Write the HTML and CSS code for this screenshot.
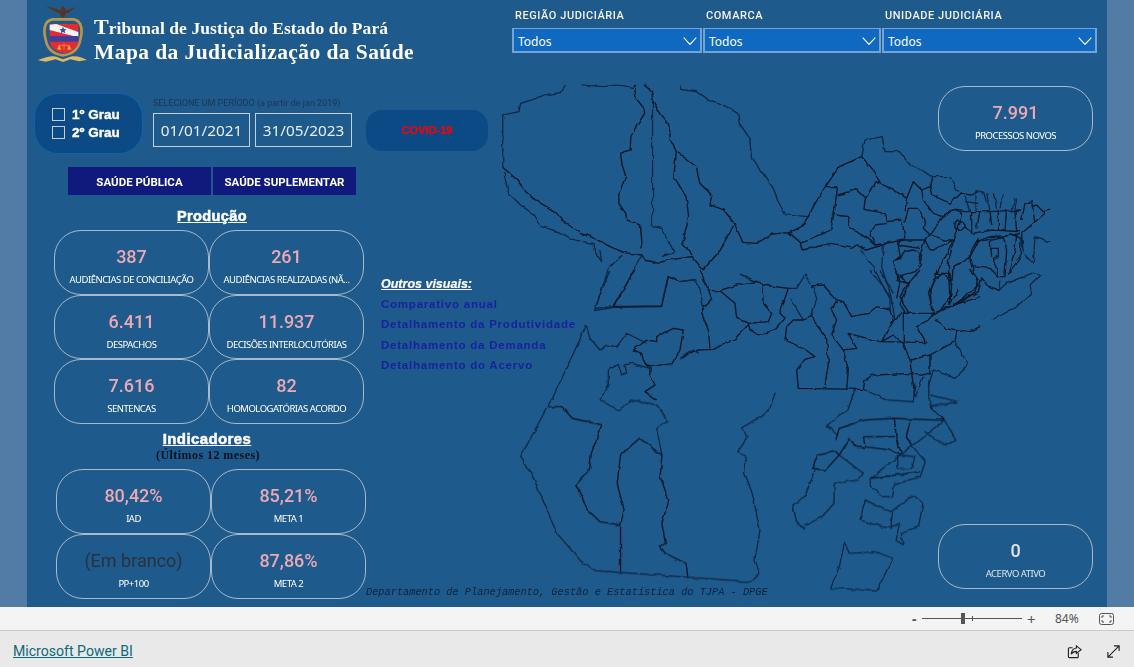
FILE: index.html
```html
<!DOCTYPE html>
<html lang="pt-BR">
<head>
    <meta charset="UTF-8">
    <meta name="viewport" content="width=device-width, initial-scale=1.0">
    <title>Mapa da Judicialização da Saúde</title>
    <link rel="stylesheet" href="styles.css">
</head>
<body>
    <div class="report">
        <div class="canvas">
            <!-- mapa do Pará, tracado por trechos -->
            <svg class="map" viewBox="27 0 1080 607" aria-hidden="true">
                <defs>
                    <filter id="rough" filterUnits="userSpaceOnUse" x="27" y="0" width="1080" height="607" color-interpolation-filters="sRGB">
                        <feTurbulence type="fractalNoise" baseFrequency="0.14" numOctaves="1" seed="4"/>
                        <feDisplacementMap in="SourceGraphic" scale="4" xChannelSelector="R" yChannelSelector="G"/>
                        <feGaussianBlur stdDeviation=".35"/>
                    </filter>
                </defs>
                <g filter="url(#rough)">
                    <g transform="translate(500 80) scale(.3444 .3333)">
                        <path class="faint" d="M8 105L55 95L60 70L105 55L125 45L175 38L190 15M240 15L300 20L340 15L385 22L395 15"/>
                        <path class="faint" d="M8 105L8 262M10 275L25 340L60 375L100 405L120 440L170 455L215 480L270 490L275 515L295 545L290 510"/>
                        <path class="faint" d="M525 15L525 28L570 35L605 60L640 70L690 100L695 130L725 175L730 230L790 320L810 370L830 405L895 410"/>
                        <path class="strong" d="M390 15L395 55L418 85L420 100L405 125L380 165L378 210L350 220L355 260L365 290L345 340L345 370L365 400L368 420L408 435L412 490L408 505"/>
                        <path class="strong" d="M8 262L50 300L75 335L110 365L160 395L190 430L235 460L275 475L320 500L360 517L412 525L420 540L460 550L490 540L558 530L590 570"/>
                        <path class="strong" d="M420 15L440 35L445 65L465 100L490 130L495 180L512 215L545 240L570 260L580 310L615 345L610 375L650 390L680 430L705 487L745 490L790 462L840 458L875 440L895 410L915 370L945 320L985 260L1050 230L1084 270"/>
                        <path class="faint" d="M1050 230L1060 180L1110 170L1118 215L1160 215L1190 255L1222 270"/>
                        <path class="strong" d="M512 215L505 290L540 350L548 410L530 490L558 525M590 570L640 510L680 430"/>
                        <path class="faint" d="M443 60L443 440L470 445L505 515L470 530M355 525L315 565L275 692L330 682"/>
                        <path class="strong" d="M875 490L960 450L970 400L980 320L945 320M980 345L1016 335M975 405L1010 410L1016 444M875 490L880 510L960 490L1016 500M840 458L875 490"/>
                        <path class="faint" d="M412 525L330 682L468 680L488 590L520 605L570 600"/>
                    </g>
                    <g transform="translate(850 170) scale(.3333)">
                        <path class="strong" d="M70 0L90 40L75 35L45 90L42 118L105 130L112 155L155 150L165 205L148 215M75 35L125 55L170 85L165 125M0 60L20 60L45 85M170 85L190 35L215 60L240 50L245 20"/>
                        <path class="faint" d="M215 0L245 20L300 20L320 60L345 75"/>
                        <path class="strong" d="M240 50L245 75L300 100L330 70L365 75M165 155L175 115L205 115L225 150L220 175L240 195M215 60L220 90L250 130L280 140L310 120L345 125M280 140L245 190L225 210L165 210L75 225L30 190L0 175M75 165L110 160M75 165L60 195L75 225M0 235L25 225L45 240L100 225"/>
                        <path class="faint" d="M35 240L70 290L95 340L130 400M100 225L95 290L120 370L130 420L135 450"/>
                        <path class="strong" d="M145 225L150 260L130 275L150 335L140 385M148 215L145 225L210 235M225 210L205 270L215 285L195 305L150 320L175 340L150 380L175 430M150 265L165 245L190 240L215 255L205 285M245 195L280 210L310 210L265 300L240 360L245 420M225 210L240 240L250 240L310 210"/>
                        <path class="strong" d="M255 310L300 310L305 355L290 400L260 430M310 210L335 130L310 120M310 210L295 280L300 400M360 260L310 290L305 340M360 260L385 215L510 190"/>
                        <path class="strong" d="M345 125L420 125L510 120M345 170L365 190L430 180L510 185M380 215L420 200L500 195L515 210M365 125L365 190M390 125L380 175M420 125L425 165M445 120L445 180M470 115L465 180M495 125L500 185M385 205L365 240L360 265M420 205L425 260M460 200L470 240L465 320M500 195L495 240L475 310M515 190L510 265L475 310M420 235L445 235L445 260L430 265L440 300L445 320L465 320M365 290L420 295L445 320M360 265L365 290L385 345L340 385L310 405"/>
                        <path class="strong" d="M245 440L260 430L310 405L385 365L395 320L410 345L445 362"/>
                        <path class="faint" d="M445 362L470 340L545 310L570 315L540 345L545 370L500 410L455 435L425 450M445 362L450 335"/>
                        <path class="faint" d="M375 125L375 65L400 62L410 100M410 70L420 125M430 70L440 115M460 70L450 115M495 85L485 125M500 85L495 120M365 75L385 65M345 80L360 125M345 95L385 100"/>
                        <path class="strong" d="M515 190L585 130M515 150L525 100L545 95L555 160M545 110L560 105L580 125L600 120"/>
                        <path class="faint" d="M515 190L520 250L550 280L555 200L600 215"/>
                        <path class="strong" d="M315 175L335 180L345 170L335 155L322 150L315 160L315 175"/>
                    </g>
                    <g transform="translate(680 270) scale(.3333)">
                        <path class="strong" d="M60 0L85 60L95 90L70 115L65 130L85 180L90 235M85 62L120 62L170 45L230 35L250 45L325 55M180 12L230 35M120 62L165 100L170 145L205 160L265 155L275 130L250 100L245 45"/>
                        <path class="faint" d="M0 35L45 28L60 60L70 110M325 55L350 55L375 15L400 55L410 85L395 140"/>
                        <path class="strong" d="M325 55L300 130L315 145L285 180L235 195L210 180L205 160M205 165L160 210L100 238L55 240L30 250L5 265"/>
                        <path class="strong" d="M390 48L430 45L470 90L490 95L515 140L565 130L590 110L630 120L640 155L620 185L605 215L640 195L665 215M470 95L455 120L470 150L455 195L490 240L530 235L505 190L600 215L740 218L710 170L745 150L765 125L840 100L900 80"/>
                        <path class="faint" d="M330 85L370 150M600 0L640 70M570 0L610 50L630 90L630 120M730 320L705 380"/>
                        <path class="strong" d="M370 150L395 140L420 175L440 210L445 280L435 350M370 150L340 150L320 170L315 210L370 235L405 260L375 268L350 300L355 355L550 358M490 240L505 300L500 355M550 358L555 330L580 315L695 310L750 315L750 255L690 270M670 130L670 220L690 270L695 310L705 380M670 130L765 130M665 130L630 160"/>
                        <path class="strong" d="M765 150L800 175L830 185L880 180L900 170M830 185L825 215L750 255M655 35L690 35L720 0M655 35L650 0M690 35L680 60L660 100L675 130M745 70L760 30L790 10L815 40L810 105M745 70L760 125M770 0L770 15M870 0L895 30L885 65L840 100M835 60L810 105"/>
                        <path class="faint" d="M825 215L865 285L825 325L760 300L745 350M550 358L620 390M520 360L515 390"/>
                    </g>
                    <g transform="translate(500 270) scale(.3333)">
                        <path class="faint" d="M330 0L285 115L340 110M260 165L155 390M540 265L580 240L600 250"/>
                        <path class="strong" d="M405 0L340 110L485 108L505 20L535 35"/>
                        <path class="faint" d="M260 165L270 205L300 240L320 225L350 230L380 190L420 210L440 220"/>
                        <path class="strong" d="M440 210L400 240L425 250L430 270L450 290L520 280L540 240L550 180L520 175L470 200L470 215L440 210M430 270L450 295L450 315L465 345L435 365L470 390"/>
                        <path class="faint" d="M300 390L325 340L325 300L355 280L365 315L380 310L375 285L395 280L450 295"/>
                    </g>
                    <g transform="translate(500 340) scale(.3444 .3333)">
                        <path class="faint" d="M148 180L60 350L100 420L165 580L240 670L280 692L730 725L755 700L740 660L755 570L730 450L710 400L715 350L690 335L720 290L700 265L780 215L800 155"/>
                        <path class="strong" d="M140 200L180 200L210 235L295 255L265 340L260 390L220 435L255 510L290 545L350 555L350 695M350 555L360 510L340 430L350 345L405 295L470 345L465 410L490 480L470 550L480 610L465 620L480 640L540 670L545 710"/>
                        <path class="faint" d="M290 180L345 210L380 180L455 195L490 245L455 265L470 345"/>
                        <path class="faint" d="M1030 150L1010 210L985 225L950 260L980 285M1124 180L1200 185L1205 130"/>
                        <path class="strong" d="M975 300L985 265L1060 240L1145 235L1150 290L1165 340M1055 290L1145 290M1055 290L1060 320L1130 330L1160 345M985 345L1015 295L1030 320L1060 325M985 345L975 335L925 345L905 385L945 390L985 345"/>
                        <path class="faint" d="M985 345L1055 400L1040 420L970 430L970 490L930 535L885 555L880 570L860 540L850 495L885 470L915 390"/>
                        <path class="strong" d="M1145 235L1260 240L1290 240M1250 200L1290 240M1075 415L1220 395M1190 245L1180 290L1195 315"/>
                        <path class="faint" d="M1245 120L1245 170L1250 200L1330 185L1250 165M1290 240L1075 415L1075 440L1115 470L1140 470L1145 435L1220 410L1235 365L1195 315M1155 345L1155 385L1195 385L1205 350L1155 345M1290 240L1325 300L1295 315L1230 275"/>
                        <path class="faint" d="M1045 540L1060 480L1090 495L1135 515L1200 465L1228 490L1215 560L1165 580L1170 615L1150 600L1160 550L1135 560L1140 515M1045 540L1110 560L1140 565M960 745L985 680L1000 610L1015 640L1090 635L1140 655L1095 750L960 745"/>
                    </g>
                </g>
            </svg>

            <header class="top">
                <div class="brand">
                    <svg class="crest" viewBox="22 15 156 180" aria-hidden="true">
                        <path d="M48 18L80 26L92 32L100 16L110 32L137 20L118 38L108 40L104 52L95 52L90 40L72 32Z" fill="#5a3420"/>
                        <path d="M68 58C44 62 40 90 48 118C52 146 72 162 100 166C128 162 148 146 152 118C160 90 156 62 132 58Z" fill="none" stroke="#b8954e" stroke-width="8"/>
                        <path d="M60 72H146V122C146 144 124 156 103 160C82 156 60 144 60 122Z" fill="#e32b34"/>
                        <path d="M60 74L80 72L146 96V112L60 90Z" fill="#f4f4f4"/>
                        <path d="M100 80L103 87L110 88L105 93L107 100L100 96L93 100L95 93L90 88L97 87Z" fill="#2f4fa8"/>
                        <rect x="60" y="108" width="86" height="17" fill="#3c3f9c"/>
                        <path d="M103 130V150M88 136H118M88 136L84 148H94ZM118 136L114 148H124Z" fill="#e0a83c" stroke="#e0a83c" stroke-width="2"/>
                        <path d="M24 180C50 170 70 166 80 170L100 178L122 170C140 166 155 172 172 180L148 184L122 178L100 186L78 178L48 185Z" fill="#d8bb6a"/>
                    </svg>
                    <div class="brand-text">
                        <div class="court"><span class="court-initial">T</span>ribunal de Justiça do Estado do Pará</div>
                        <div class="title">Mapa da Judicialização da Saúde</div>
                    </div>
                </div>
                <div class="filters">
                    <div class="filter filter-region">
                        <label class="filter-label">REGIÃO JUDICIÁRIA</label>
                        <div class="select">Todos
                            <svg class="chevron" viewBox="0 0 12 7"><path d="M.5 .5L6 6.5L11.5 .5"/></svg>
                        </div>
                    </div>
                    <div class="filter filter-comarca">
                        <label class="filter-label">COMARCA</label>
                        <div class="select">Todos
                            <svg class="chevron" viewBox="0 0 12 7"><path d="M.5 .5L6 6.5L11.5 .5"/></svg>
                        </div>
                    </div>
                    <div class="filter filter-unit">
                        <label class="filter-label">UNIDADE JUDICIÁRIA</label>
                        <div class="select">Todos
                            <svg class="chevron" viewBox="0 0 12 7"><path d="M.5 .5L6 6.5L11.5 .5"/></svg>
                        </div>
                    </div>
                </div>
            </header>

            <main class="body">
                <section class="left">
                    <div class="controls">
                        <div class="grau">
                            <div class="grau-item"><span class="check"></span>1º Grau</div>
                            <div class="grau-item"><span class="check"></span>2º Grau</div>
                        </div>
                        <div class="period">
                            <div class="period-label">SELECIONE UM PERÍODO (a partir de jan 2019)</div>
                            <div class="dates">
                                <div class="date">01/01/2021</div>
                                <div class="date">31/05/2023</div>
                            </div>
                        </div>
                        <div class="covid">COVID-19</div>
                    </div>

                    <div class="tabs">
                        <div class="tab">SAÚDE PÚBLICA</div>
                        <div class="tab">SAÚDE SUPLEMENTAR</div>
                    </div>

                    <div class="stats">
                        <div class="stats-main">
                            <h2 class="section-title">Produção</h2>
                            <div class="cards">
                                <div class="card"><div class="card-value">387</div><div class="card-label">AUDIÊNCIAS DE CONCILIAÇÃO</div></div>
                                <div class="card"><div class="card-value">261</div><div class="card-label">AUDIÊNCIAS REALIZADAS (NÃ...</div></div>
                                <div class="card"><div class="card-value">6.411</div><div class="card-label">DESPACHOS</div></div>
                                <div class="card"><div class="card-value">11.937</div><div class="card-label">DECISÕES INTERLOCUTÓRIAS</div></div>
                                <div class="card"><div class="card-value">7.616</div><div class="card-label">SENTENCAS</div></div>
                                <div class="card"><div class="card-value">82</div><div class="card-label">HOMOLOGATÓRIAS ACORDO</div></div>
                            </div>
                            <h2 class="section-title section-title-ind">Indicadores</h2>
                            <div class="section-sub">(Últimos 12 meses)</div>
                            <div class="cards cards-ind">
                                <div class="card"><div class="card-value">80,42%</div><div class="card-label">IAD</div></div>
                                <div class="card"><div class="card-value">85,21%</div><div class="card-label">META 1</div></div>
                                <div class="card"><div class="card-value card-blank">(Em branco)</div><div class="card-label">PP+100</div></div>
                                <div class="card"><div class="card-value">87,86%</div><div class="card-label">META 2</div></div>
                            </div>
                        </div>
                        <aside class="others">
                            <div class="others-title">Outros visuais:</div>
                            <a class="others-link">Comparativo anual</a>
                            <a class="others-link">Detalhamento da Produtividade</a>
                            <a class="others-link">Detalhamento da Demanda</a>
                            <a class="others-link">Detalhamento do Acervo</a>
                            <div class="credit">Departamento de Planejamento, Gestão e Estatística do TJPA - DPGE</div>
                        </aside>
                    </div>
                </section>

                <section class="totals">
                    <div class="card"><div class="card-value">7.991</div><div class="card-label">PROCESSOS NOVOS</div></div>
                    <div class="card"><div class="card-value card-zero">0</div><div class="card-label card-label-dim">ACERVO ATIVO</div></div>
                </section>
            </main>
        </div>
    </div>

    <div class="zoombar">
        <span class="zoom-minus">-</span>
        <div class="slider"><span class="slider-tick"></span><span class="slider-thumb"></span></div>
        <span class="zoom-plus">+</span>
        <span class="zoom-value">84%</span>
        <svg class="fit" viewBox="0 0 15 12"><rect x=".5" y=".5" width="14" height="11" rx="2"/><path d="M3 5V3H5M10 3H12V5M12 7V9H10M5 9H3V7"/></svg>
    </div>

    <footer class="pbi">
        <a class="pbi-link">Microsoft Power BI</a>
        <div class="pbi-actions">
            <svg class="pbi-icon" viewBox="0 0 16 16"><path d="M12 9.500V13.500C12 14 11.600 14.500 11 14.500H2.500C2 14.500 1.500 14 1.500 13.500V5C1.500 4.500 2 4 2.500 4H6"/><path d="M10 2L15 6L10 10V7.800C7.500 7.800 5.800 8.800 4.500 11C4.800 7.500 6.800 4.800 10 4.300Z"/></svg>
            <svg class="pbi-icon" viewBox="0 0 16 16"><path d="M2 14L14 2M8.500 2H14V7.500M2 8.500V14H7.500"/></svg>
        </div>
    </footer>
</body>
</html>
```

FILE: styles.css
```css
* {
    box-sizing: border-box;
}

body {
    margin: 0;
    width: 1134px;
    height: 667px;
    overflow: hidden;
    font-family: "Noto Sans", Arial, sans-serif;
    background-color: #e9e9e9;
}

.report {
    height: 607px;
    padding: 0 27px;
    background-color: #527ba5;
}

.canvas {
    position: relative;
    width: 1080px;
    height: 607px;
    background-color: #1f5a8c;
}

/* mapa */
.map {
    position: absolute;
    left: 0;
    top: 0;
    width: 1080px;
    height: 607px;
}

.map path {
    fill: none;
    stroke-linejoin: round;
}

.map .strong {
    stroke: #081828;
    stroke-width: 4;
}

.map .faint {
    stroke: #0c2540;
    stroke-width: 3.6;
}

/* cabeçalho */
.top {
    position: relative;
    display: flex;
    height: 86px;
    padding-left: 10px;
}

.brand {
    display: flex;
    padding-top: 5px;
}

.crest {
    width: 52px;
    height: 60px;
}

.brand-text {
    margin-left: 5px;
    padding-top: 11px;
    color: #fff;
    font-family: "Liberation Serif", serif;
    font-weight: bold;
}

.court {
    font-size: 17.5px;
    line-height: 22px;
    letter-spacing: .09px;
}

.court-initial {
    font-size: 22px;
}

.title {
    margin-top: 1px;
    font-size: 21.5px;
    line-height: 25px;
    letter-spacing: .42px;
}

.filters {
    display: flex;
    margin-left: auto;
    margin-right: 10px;
    padding-top: 8px;
    gap: 1px;
}

.filter-region {
    width: 190px;
}

.filter-comarca {
    width: 178px;
}

.filter-unit {
    width: 215px;
}

.filter-label {
    display: block;
    height: 20px;
    padding-left: 3px;
    color: #f2f2f2;
    font-family: Roboto, sans-serif;
    font-size: 11px;
    font-weight: 500;
    line-height: 15px;
    letter-spacing: .55px;
}

.select {
    position: relative;
    height: 25px;
    padding-left: 4px;
    border: 2px solid #77a3d3;
    border-top-width: 1px;
    background-color: #0f69c0;
    color: #fff;
    font-size: 12px;
    line-height: 26px;
}

.chevron {
    position: absolute;
    right: 3px;
    top: 8px;
    width: 14px;
    height: 8px;
}

.chevron path {
    fill: none;
    stroke: #fff;
}

/* corpo */
.body {
    position: relative;
    display: flex;
    justify-content: space-between;
    padding: 0 14px 0 7px;
}

.controls {
    display: flex;
    margin-top: 7px;
}

.grau {
    display: flex;
    flex-direction: column;
    justify-content: center;
    width: 109px;
    height: 61px;
    padding-left: 17px;
    gap: 4px;
    border: 1px solid #1062ae;
    border-radius: 24px;
    background-color: #0b4a85;
}

.grau-item {
    display: flex;
    align-items: center;
    height: 14px;
    color: #fff;
    font-family: "Liberation Sans", sans-serif;
    font-size: 13.5px;
    font-weight: bold;
    -webkit-text-stroke: .4px #fff;
}

.check {
    width: 13px;
    height: 13px;
    margin-right: 7px;
    border: 1px solid #c6ccd4;
}

.period {
    margin-left: 10px;
}

.period-label {
    height: 20px;
    padding-top: 5px;
    color: #1d3550;
    font-family: Roboto, sans-serif;
    font-size: 9px;
    line-height: 10px;
    white-space: nowrap;
}

.dates {
    display: flex;
    gap: 5px;
}

.date {
    width: 97px;
    height: 34px;
    border: 1px solid #c3d0dd;
    color: #e8edf3;
    font-size: 15.3px;
    line-height: 33px;
    text-align: center;
}

.covid {
    width: 122px;
    height: 41px;
    margin: 17px 0 0 14px;
    border-radius: 16px;
    background-color: #0b4a85;
    color: #f00;
    font-family: "Liberation Sans", sans-serif;
    font-size: 11px;
    font-weight: bold;
    line-height: 41px;
    text-align: center;
    -webkit-text-stroke: .2px #f00;
}

.tabs {
    display: flex;
    gap: 2px;
    margin: 13px 0 0 34px;
}

.tab {
    width: 143px;
    height: 28px;
    background-color: #0f1a7c;
    color: #fff;
    font-family: Roboto, sans-serif;
    font-size: 11.5px;
    font-weight: 700;
    line-height: 30px;
    text-align: center;
}

.stats {
    display: flex;
    height: 403px;
}

.stats-main {
    width: 332px;
    padding-left: 20px;
}

.section-title {
    margin: 13px 0 6px;
    padding-left: 4px;
    color: #fff;
    font-family: "Liberation Sans", sans-serif;
    font-size: 14.5px;
    font-weight: bold;
    line-height: 16px;
    letter-spacing: .4px;
    text-align: center;
    text-decoration: underline;
    -webkit-text-stroke: .5px #fff;
}

.section-title-ind {
    margin: 7px 0 1px;
    padding: 0 6px 0 0;
    font-size: 15px;
}

.section-sub {
    margin-bottom: 7px;
    padding-right: 4px;
    color: #08131f;
    font-family: "Liberation Serif", serif;
    font-size: 12px;
    font-weight: bold;
    line-height: 14px;
    letter-spacing: .45px;
    text-align: center;
}

.cards {
    display: grid;
    grid-template-columns: 155px 155px;
    grid-auto-rows: 64.500px;
}

.cards-ind {
    margin-left: 2px;
    grid-auto-rows: 65px;
}

.card {
    display: flex;
    flex-direction: column;
    align-items: center;
    height: 100%;
    padding-top: 14px;
    border: 1px solid #a9b9c9;
    border-radius: 27px;
}

.card-value {
    color: #eba9b3;
    font-family: Roboto, sans-serif;
    font-size: 18px;
    font-weight: 500;
    line-height: 24px;
}

.card-blank {
    color: #28323e;
    font-weight: 400;
}

.card-zero {
    color: #dfe3e8;
}

.card-label {
    margin-top: 4px;
    color: #fff;
    font-size: 9.5px;
    line-height: 14px;
    letter-spacing: -.5px;
    white-space: nowrap;
}

.card-label-dim {
    color: #dfe3e8;
}

.others {
    display: flex;
    flex-direction: column;
    width: 130px;
    padding: 82px 0 0 15px;
    white-space: nowrap;
}

.others-title {
    height: 17px;
    color: #fff;
    font-family: "Liberation Sans", sans-serif;
    font-size: 12.5px;
    font-weight: bold;
    font-style: italic;
    line-height: 15px;
    text-decoration: underline;
    -webkit-text-stroke: .2px #fff;
}

.others-link {
    height: 20.300px;
    color: #1622a0;
    font-family: "Liberation Sans", sans-serif;
    font-size: 11.5px;
    font-weight: bold;
    line-height: 20px;
    letter-spacing: .77px;
}

.credit {
    margin: auto 0 0 -15px;
    color: #0d2339;
    font-family: "Liberation Mono", monospace;
    font-size: 10.300px;
    font-style: italic;
    line-height: 12px;
}

.totals {
    display: flex;
    flex-direction: column;
    justify-content: space-between;
    width: 155px;
    height: 503px;
}

.totals .card {
    height: 65px;
}

/* barra de zoom */
.zoombar {
    display: flex;
    align-items: center;
    height: 24px;
    padding-left: 912px;
    border-bottom: 1px solid #c9c9c9;
    background-color: #f4f4f4;
    color: #555;
}

.zoom-minus {
    width: 10px;
    font-size: 14px;
    font-weight: bold;
}

.slider {
    position: relative;
    width: 100px;
    height: 1px;
    background-color: #555;
}

.slider-tick {
    position: absolute;
    left: 50px;
    top: -2px;
    width: 1px;
    height: 5px;
    background-color: #555;
}

.slider-thumb {
    position: absolute;
    left: 39px;
    top: -5px;
    width: 4px;
    height: 11px;
    background-color: #555;
}

.zoom-plus {
    width: 31px;
    padding-left: 5px;
    font-size: 15px;
}

.zoom-value {
    width: 41px;
    padding-left: 2px;
    font-size: 12px;
}

.fit {
    width: 15px;
    height: 12px;
    margin-left: 5px;
}

.fit rect,
.fit path {
    fill: none;
    stroke: #555;
}

/* rodapé */
.pbi {
    display: flex;
    align-items: center;
    justify-content: space-between;
    height: 36px;
    padding: 4px 13px 0;
    background-color: #e9e9e9;
}

.pbi-link {
    color: #0f6a78;
    font-family: Roboto, sans-serif;
    font-size: 14.1px;
    text-decoration: underline;
}

.pbi-actions {
    display: flex;
    gap: 24px;
}

.pbi-icon {
    width: 15px;
    height: 15px;
}

.pbi-icon path {
    fill: none;
    stroke: #222;
    stroke-width: 1.2;
}
```
